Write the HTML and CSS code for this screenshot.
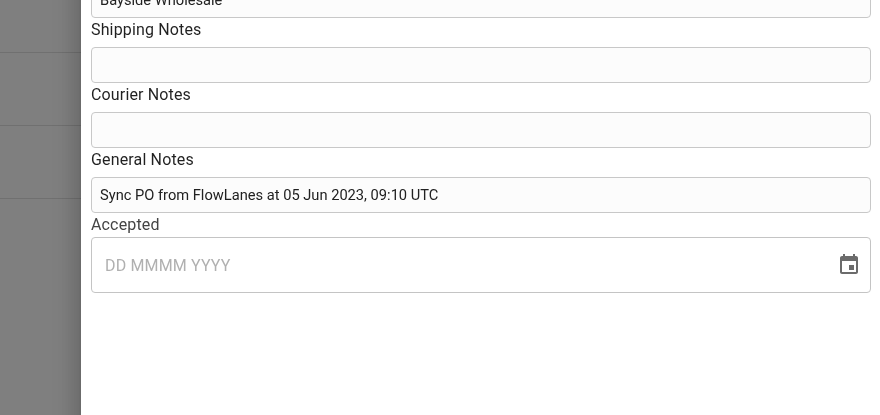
FILE: index.html
```html
<!DOCTYPE html>
<html lang="en">
<head>
    <meta charset="UTF-8">
    <meta name="viewport" content="width=device-width, initial-scale=1.0">
    <title>Order Details</title>
    <link rel="stylesheet" href="styles.css">
</head>
<body>
    <div class="table">
        <div class="table-row"></div>
        <div class="table-row"></div>
        <div class="table-row"></div>
    </div>

    <div class="backdrop"></div>

    <div class="drawer">
        <div class="field">
            <input class="text-input" type="text" value="Bayside Wholesale" aria-label="Customer">
        </div>
        <div class="field">
            <label for="shippingNotes">Shipping Notes</label>
            <input class="text-input" id="shippingNotes" type="text">
        </div>
        <div class="field">
            <label for="courierNotes">Courier Notes</label>
            <input class="text-input" id="courierNotes" type="text">
        </div>
        <div class="field">
            <label for="generalNotes">General Notes</label>
            <input class="text-input" id="generalNotes" type="text" value="Sync PO from FlowLanes at 05 Jun 2023, 09:10 UTC">
        </div>
        <div class="field date-field">
            <label for="accepted">Accepted</label>
            <div class="date-input">
                <input id="accepted" type="text" placeholder="DD MMMM YYYY">
                <button class="icon-button" type="button" aria-label="Choose date">
                    <svg viewBox="0 0 24 24">
                        <path d="M17 12h-5v5h5v-5zM16 1v2H8V1H6v2H5c-1.11 0-1.99.9-1.99 2L3 19c0 1.1.89 2 2 2h14c1.1 0 2-.9 2-2V5c0-1.1-.9-2-2-2h-1V1h-2zm3 18H5V8h14v11z"/>
                    </svg>
                </button>
            </div>
        </div>
    </div>
</body>
</html>
```
FILE: styles.css
```css
* {
    box-sizing: border-box;
}

body {
    margin: 0;
    height: 100vh;
    overflow: hidden;
    font-family: Roboto, sans-serif;
    font-size: 16px;
    line-height: 1.5;
    letter-spacing: 0.15px;
    color: rgba(0, 0, 0, 0.87);
    background-color: #fff;
}

.table-row {
    height: 73px;
    border-bottom: 1px solid #e0e0e0;
}

.table-row:first-child {
    height: 53px;
}

.backdrop {
    position: fixed;
    inset: 0;
    background-color: rgba(0, 0, 0, 0.5);
}

.drawer {
    position: fixed;
    top: -60px;
    bottom: -60px;
    left: 81px;
    right: 0;
    padding: 42px 9px 0 10px;
    background-color: #fff;
    box-shadow: 0 8px 10px -5px rgba(0, 0, 0, 0.2),
        0 16px 24px 2px rgba(0, 0, 0, 0.14),
        0 6px 30px 5px rgba(0, 0, 0, 0.12);
}

.field label {
    display: block;
    margin-bottom: 5px;
}

.text-input {
    display: block;
    width: 100%;
    height: 36px;
    padding: 0 8px;
    border: 1px solid #c8c8c8;
    border-radius: 4px;
    background-color: #fcfcfc;
    font-family: inherit;
    font-size: 11pt;
    color: #212121;
}

.date-field label {
    margin-bottom: 0;
    color: #444;
}

.date-input {
    display: flex;
    align-items: center;
    height: 56px;
    padding: 0 9px 0 13px;
    border: 1px solid #c4c4c4;
    border-radius: 4px;
}

.date-input input {
    flex: 1;
    padding: 2px 0 0;
    border: none;
    outline: none;
    font: inherit;
    letter-spacing: inherit;
    background: none;
}

.date-input input::placeholder {
    color: #b0b0b0;
}

.icon-button {
    display: flex;
    padding: 0;
    border: none;
    background: none;
    cursor: pointer;
}

.icon-button svg {
    width: 24px;
    height: 24px;
    fill: #6b6b6b;
}
```
